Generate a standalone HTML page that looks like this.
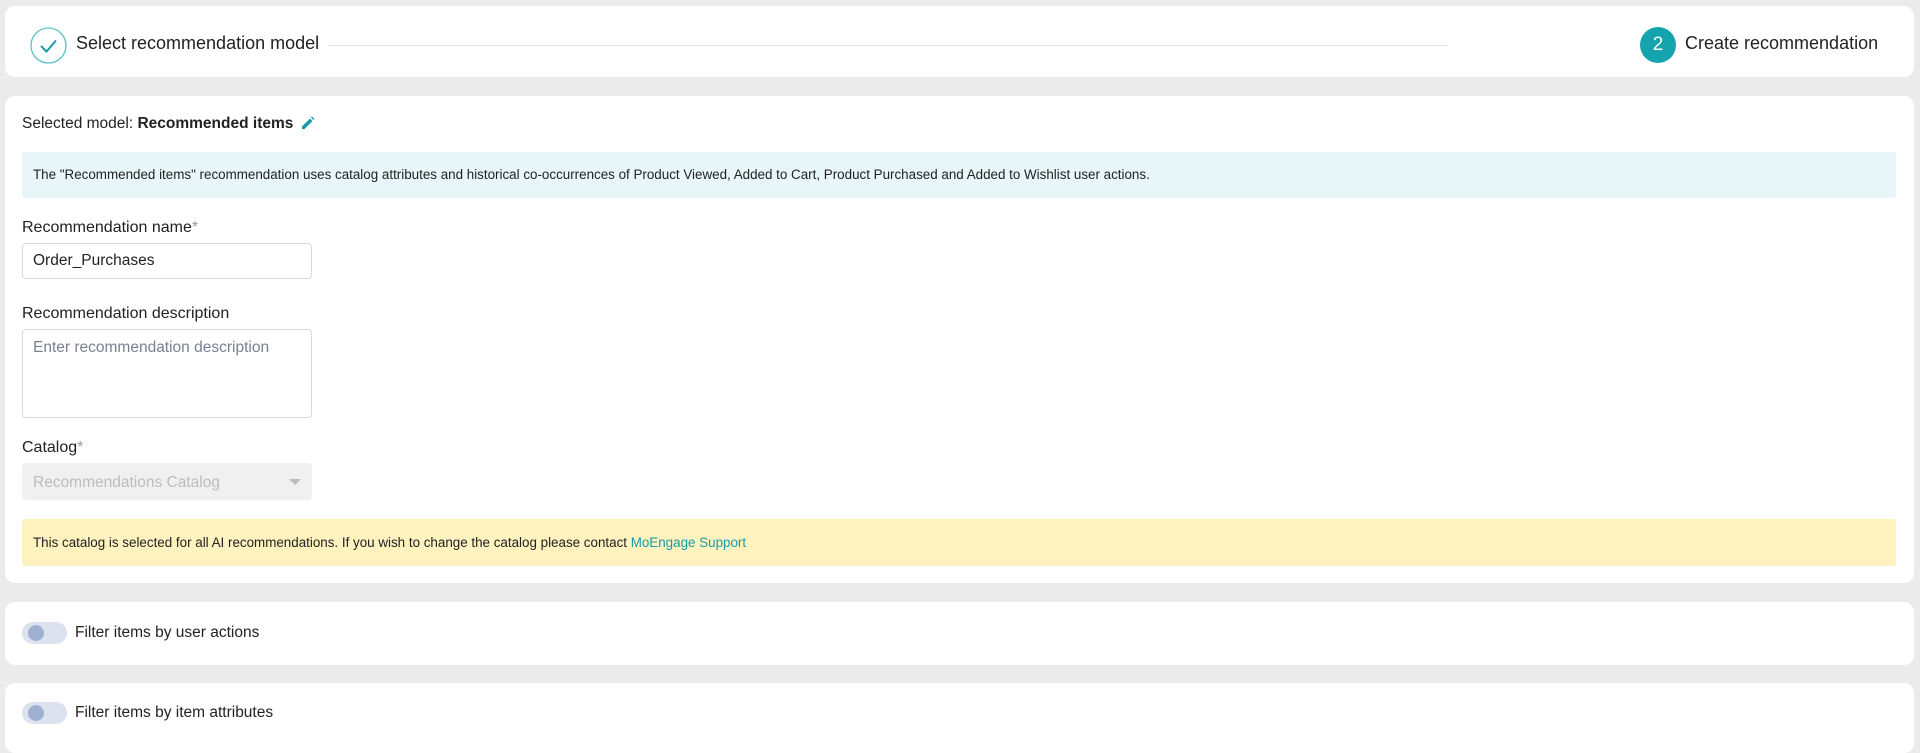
<!DOCTYPE html>
<html><head><style>
*{box-sizing:border-box;margin:0;padding:0}
body{width:1920px;height:748px;background:#ebebeb;font-family:"Liberation Sans",sans-serif;color:#222;position:relative;overflow:hidden}
.card{position:absolute;left:5px;width:1909px;background:#fff;border-radius:10px}
.abs{position:absolute}
.lbl{position:absolute;left:22px;font-size:16px;color:#222}
.ast{color:#999}
.inp{position:absolute;left:22px;width:290px;border:1px solid #d9d9d9;border-radius:4px;background:#fff;font-size:15.5px;padding-left:10px}
.tog{position:absolute;left:17px;width:45px;height:22px;border-radius:11px;background:#dce2ee}
.tog:after{content:"";position:absolute;left:6px;top:3px;width:16px;height:16px;border-radius:50%;background:#9fb1d3}
</style></head><body>
<div class="card" style="top:6px;height:71px">
  <svg class="abs" style="left:25px;top:21px" width="37" height="37" viewBox="0 0 37 37"><circle cx="18.5" cy="18.5" r="17.5" fill="none" stroke="#5fbfc8" stroke-width="1.3"/><path d="M11 19 L16.5 24.5 L26 13.5" fill="none" stroke="#1a9aa5" stroke-width="2"/></svg>
  <div class="abs" style="left:71px;top:27px;font-size:18px;color:#222">Select recommendation model</div>
  <div class="abs" style="left:323px;top:39px;width:1120px;height:1px;background:#dfe3ea"></div>
  <div class="abs" style="left:1635px;top:21px;width:36px;height:36px;border-radius:50%;background:#15a3ad;color:#fff;font-size:19px;text-align:center;line-height:36px">2</div>
  <div class="abs" style="left:1680px;top:27px;font-size:18px;color:#222">Create recommendation</div>
</div>
<div class="card" style="top:96px;height:487px">
  <div class="abs" style="left:17px;top:19px;font-size:15.5px">Selected model: <b>Recommended items</b></div>
  <svg class="abs" style="left:296px;top:20px" width="14" height="14" viewBox="0 0 14 14"><path d="M1 13 L1 10.5 L9 2.5 L11.5 5 L3.5 13 Z M10 1.5 L11 .5 L13.5 3 L12.5 4 Z" fill="#1a9aa5"/></svg>
  <div class="abs" style="left:17px;top:56px;width:1874px;height:46px;background:#e8f6fa;border-radius:3px;font-size:13.4px;line-height:46px;padding-left:11px;color:#222">The "Recommended items" recommendation uses catalog attributes and historical co-occurrences of Product Viewed, Added to Cart, Product Purchased and Added to Wishlist user actions.</div>
  <div class="lbl" style="left:17px;top:123px">Recommendation name<span class="ast">*</span></div>
  <div class="inp" style="left:17px;top:147px;height:36px;line-height:34px">Order_Purchases</div>
  <div class="lbl" style="left:17px;top:209px">Recommendation description</div>
  <div class="inp" style="left:17px;top:233px;height:89px;padding-top:9px;color:#7a8090">Enter recommendation description</div>
  <div class="lbl" style="left:17px;top:343px">Catalog<span class="ast">*</span></div>
  <div class="inp" style="left:17px;top:367px;height:37px;line-height:37px;background:#f0f0f0;border-color:#f0f0f0;color:#bcbcbc">Recommendations Catalog<span style="position:absolute;right:10px;top:15px;width:0;height:0;border-left:6px solid transparent;border-right:6px solid transparent;border-top:6px solid #bbb"></span></div>
  <div class="abs" style="left:17px;top:423px;width:1874px;height:47px;background:#fef2bf;border-radius:3px;font-size:13.4px;line-height:47px;padding-left:11px;color:#222">This catalog is selected for all AI recommendations. If you wish to change the catalog please contact <span style="color:#1a9aa5">MoEngage Support</span></div>
</div>
<div class="card" style="top:602px;height:63px">
  <div class="tog" style="top:20px"></div>
  <div class="abs" style="left:70px;top:22px;font-size:15.5px">Filter items by user actions</div>
</div>
<div class="card" style="top:683px;height:70px">
  <div class="tog" style="top:19px"></div>
  <div class="abs" style="left:70px;top:21px;font-size:15.5px">Filter items by item attributes</div>
</div>
</body></html>
